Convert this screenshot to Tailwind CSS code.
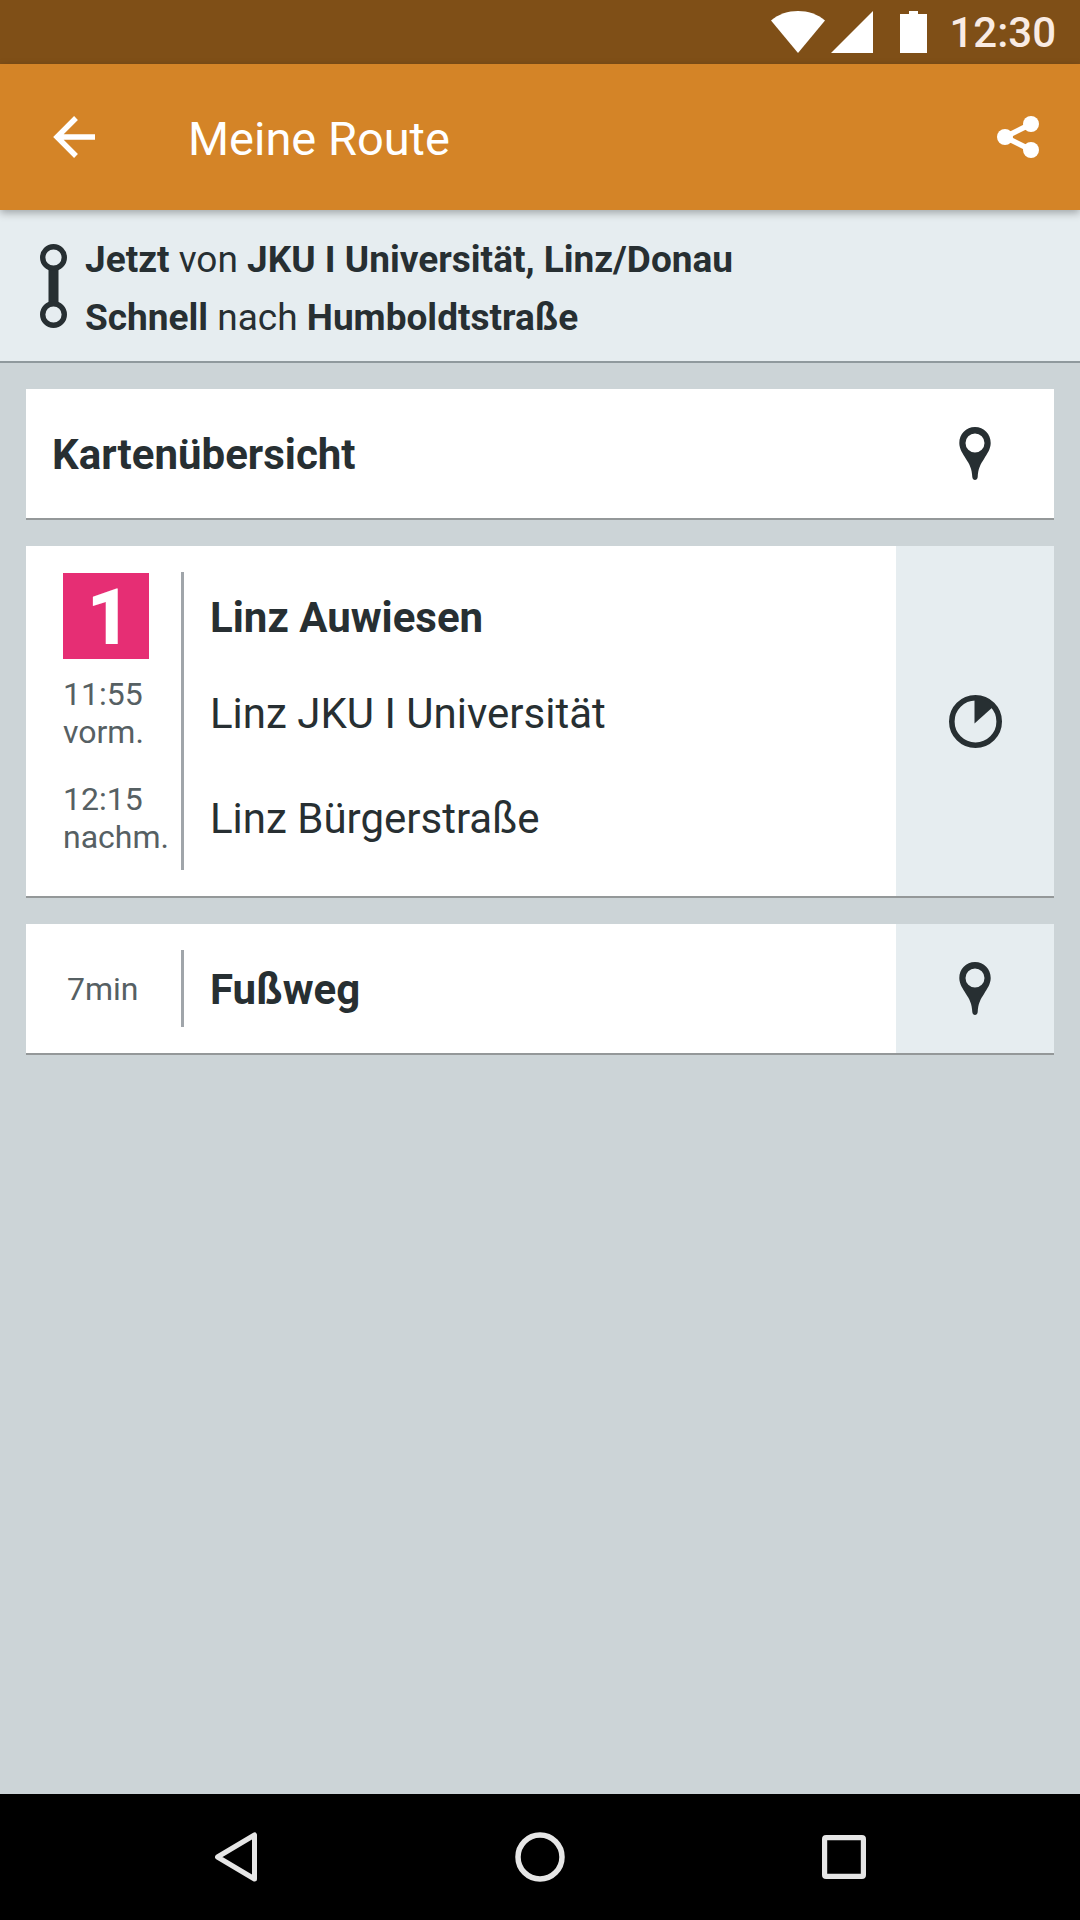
<!DOCTYPE html>
<html lang="de">
<head>
  <meta charset="UTF-8">
  <meta name="viewport" content="width=device-width, initial-scale=1">
  <title>Meine Route</title>
  <script src="https://cdn.jsdelivr.net/npm/@tailwindcss/browser@4"></script>
</head>
<body class="min-h-screen flex flex-col bg-[#ccd4d7] text-[#272f32] font-['Roboto',sans-serif]">

  <!-- Statusleiste -->
  <div class="h-16 flex items-center justify-end pr-6 bg-[#7f4f17] text-white">
    <svg class="w-[54px] h-[42px] mr-1.5" viewBox="0 0 54 42" fill="currentColor"><path d="M0 9.500C7.500 3 17 0 27 0s19.500 3 27 9.500L27 42z"/></svg>
    <svg class="w-[42px] h-[42px] mr-[27px]" viewBox="0 0 42 42" fill="currentColor"><path d="M42 0v42H0z"/></svg>
    <svg class="w-[27px] h-[42px] mr-[22px]" viewBox="0 0 27 42" fill="currentColor"><path d="M9 0h9v3h9v39H0V3h9z"/></svg>
    <span class="pt-0.5 text-[42px] leading-[50px] font-medium text-[#f9ebe3]">12:30</span>
  </div>

  <header class="relative h-[146px] flex items-center px-10 bg-[#d48427] text-white shadow-[0_3px_8px_rgba(0,0,0,0.3)]">
    <button type="button" aria-label="Zurück" class="w-[68px] h-[68px] flex items-center justify-center">
      <svg class="w-[42px] h-[42px]" viewBox="0 0 42 42" fill="none" stroke="currentColor" stroke-width="5.400"><path d="M42 21H5M23 2L4 21l19 19"/></svg>
    </button>
    <h1 class="flex-1 ml-20 pt-1 text-[47px] leading-[56px]">Meine Route</h1>
    <button type="button" aria-label="Teilen" class="w-11 h-[68px] flex items-center justify-center">
      <svg class="w-[42px] h-[42px]" viewBox="0 0 42 42" fill="currentColor">
        <path d="M34 8L8 21l26 13" fill="none" stroke="currentColor" stroke-width="5.500"/>
        <circle cx="8" cy="21" r="8"/>
        <circle cx="34" cy="8" r="8"/>
        <circle cx="34" cy="34" r="8"/>
      </svg>
    </button>
  </header>

  <section class="flex items-center gap-[18px] pl-10 pt-4 pb-[15px] h-[153px] bg-[#e6edf0] border-b-2 border-[#8f999d]">
    <svg class="w-[27px] h-[84px]" viewBox="0 0 27 84" fill="none" stroke="currentColor">
      <path d="M13.500 24v36" stroke-width="10"/>
      <circle cx="13.500" cy="13.500" r="10.800" stroke-width="5.400"/>
      <circle cx="13.500" cy="70.500" r="10.800" stroke-width="5.400"/>
    </svg>
    <div class="pt-1.5 text-[37px] leading-[58px]">
      <p><b>Jetzt</b> von <b>JKU I Universität, Linz/Donau</b></p>
      <p><b>Schnell</b> nach <b>Humboldtstraße</b></p>
    </div>
  </section>

  <main class="flex-1 flex flex-col gap-[26px] p-[26px]">

    <button type="button" class="flex items-center h-[131px] bg-white border-b-2 border-[#949899] text-left">
      <span class="flex-1 pt-0.5 pl-[26px] text-[42px] leading-[50px] font-bold">Kartenübersicht</span>
      <span class="w-[158px] flex justify-center">
        <svg class="w-8 h-[53px]" viewBox="0 0 32 53" fill="currentColor"><path fill-rule="evenodd" d="M16 0C7 0 .3 7 .3 16 .3 22 4 27 7 32c3.500 5 6 10 6.300 18 .2 4 5.200 4 5.400 0 .3-8 2.800-13 6.300-18 3-5 6.700-10 6.700-16C31.700 7 25 0 16 0zm0 6.500a9.500 9.500 0 1 1 0 19 9.500 9.500 0 0 1 0-19z"/></svg>
      </span>
    </button>

    <!-- Fahrt -->
    <section class="flex bg-white border-b-2 border-[#949899]">
      <div class="flex-1 flex py-[26px]">
        <div class="w-[155px] pl-[37px] text-[32px] leading-[38px] text-[#566063]">
          <div class="h-[88px] flex items-center">
            <span class="w-[86px] h-[86px] flex items-center justify-center pt-1 pl-1.5 bg-[#e62e74] text-white text-[78px] leading-[82px] font-extrabold">1</span>
          </div>
          <p class="h-[105px] flex items-center">11:55<br>vorm.</p>
          <p class="h-[105px] flex items-center">12:15<br>nachm.</p>
        </div>
        <div class="flex-1 border-l-3 border-[#a0a5aa] pl-[26px] text-[42px] leading-[50px]">
          <h2 class="h-[88px] flex items-center pt-1 font-bold">Linz Auwiesen</h2>
          <p class="h-[105px] flex items-center pt-0.5">Linz JKU I Universität</p>
          <p class="h-[105px] flex items-center pt-0.5">Linz Bürgerstraße</p>
        </div>
      </div>
      <button type="button" aria-label="Zwischenhalte" class="w-[158px] flex items-center justify-center bg-[#e6edf0]">
        <svg class="w-[53px] h-[53px]" viewBox="0 0 53 53">
          <circle cx="26.500" cy="26.500" r="23.700" fill="none" stroke="currentColor" stroke-width="5.600"/>
          <path d="M25.500 3v25.500L45 11C40 6 33 3 25.500 3z" fill="currentColor"/>
        </svg>
      </button>
    </section>

    <!-- Fußweg -->
    <section class="flex bg-white border-b-2 border-[#949899]">
      <div class="flex-1 flex py-[26px]">
        <p class="w-[155px] pl-[41px] flex items-center text-[32px] leading-[38px] text-[#566063]">7min</p>
        <h2 class="flex-1 h-[77px] flex items-center pt-0.5 border-l-3 border-[#a0a5aa] pl-[26px] text-[42px] leading-[50px] font-bold">Fußweg</h2>
      </div>
      <button type="button" aria-label="Fußweg auf Karte" class="w-[158px] flex items-center justify-center bg-[#e6edf0]">
        <svg class="w-8 h-[53px]" viewBox="0 0 32 53" fill="currentColor"><path fill-rule="evenodd" d="M16 0C7 0 .3 7 .3 16 .3 22 4 27 7 32c3.500 5 6 10 6.300 18 .2 4 5.200 4 5.400 0 .3-8 2.800-13 6.300-18 3-5 6.700-10 6.700-16C31.700 7 25 0 16 0zm0 6.500a9.500 9.500 0 1 1 0 19 9.500 9.500 0 0 1 0-19z"/></svg>
      </button>
    </section>
  </main>

  <!-- Navigationsleiste -->
  <nav class="h-[126px] grid grid-cols-3 px-[84px] bg-black text-[#e6e6e6]">
    <button type="button" aria-label="Zurück" class="flex items-center justify-center">
      <svg class="w-[42px] h-[50px]" viewBox="0 0 42 50" fill="none" stroke="currentColor" stroke-width="5" stroke-linejoin="round"><path d="M39.500 3v44L2.500 25z"/></svg>
    </button>
    <button type="button" aria-label="Startseite" class="flex items-center justify-center">
      <svg class="w-[50px] h-[50px]" viewBox="0 0 50 50" fill="none" stroke="currentColor" stroke-width="5.500"><circle cx="25" cy="25" r="22"/></svg>
    </button>
    <button type="button" aria-label="Letzte Apps" class="flex items-center justify-center">
      <svg class="w-11 h-11" viewBox="0 0 44 44" fill="none" stroke="currentColor" stroke-width="5.200"><rect x="2.600" y="2.600" width="38.800" height="38.800" rx="1.500"/></svg>
    </button>
  </nav>
</body>
</html>
